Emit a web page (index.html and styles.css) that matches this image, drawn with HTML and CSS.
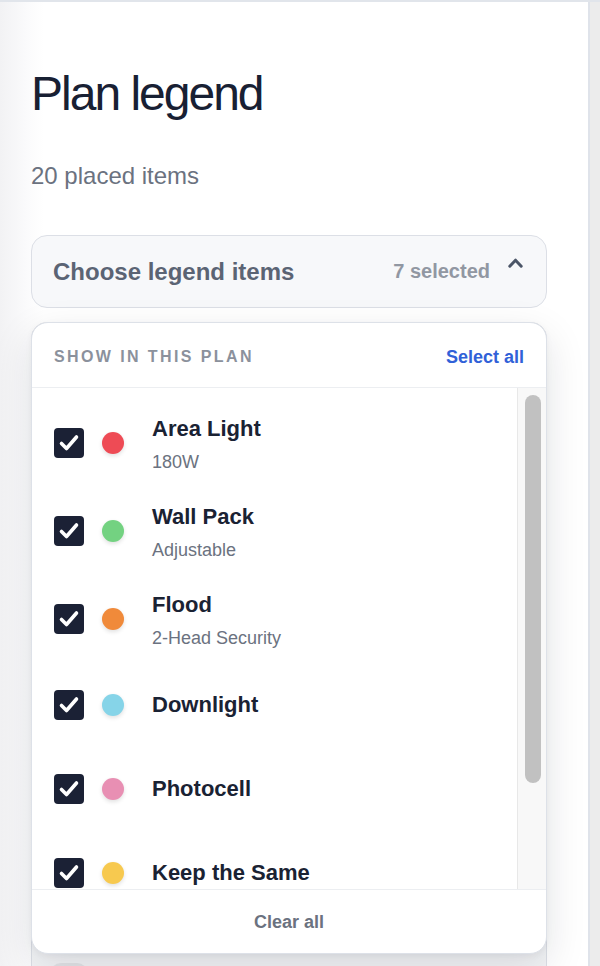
FILE: index.html
```html
<!DOCTYPE html>
<html lang="en">
<head>
<meta charset="utf-8">
<title>Plan legend</title>
<link rel="stylesheet" href="styles.css">
</head>
<body>
<div class="app">
  <aside class="panel">
    <h1 class="title">Plan legend</h1>
    <p class="count">20 placed items</p>
    <div class="picker">
      <button class="picker-btn" type="button">
        <span class="picker-label">Choose legend items</span>
        <span class="picker-count">7 selected</span>
        <svg class="chev" width="15" height="10" viewBox="0 0 15 10" aria-hidden="true"><polyline points="1.8,8.2 7.5,2.2 13.2,8.2" fill="none" stroke="#4b5567" stroke-width="3" stroke-linecap="round" stroke-linejoin="round"/></svg>
      </button>
      <div class="popover">
        <div class="pop-head">
          <span class="pop-label">Show in this plan</span>
          <span class="pop-action">Select all</span>
        </div>
        <div class="pop-body">
          <ul class="pop-list">
            <li class="item has-sub">
              <span class="check"><svg width="30" height="30" viewBox="0 0 30 30"><polyline points="7.5,15.5 12.5,20.5 22.5,9" fill="none" stroke="#fff" stroke-width="3.6" stroke-linecap="round" stroke-linejoin="round"/></svg></span>
              <span class="dot dot-red"></span>
              <span class="text"><span class="name">Area Light</span><span class="sub">180W</span></span>
            </li>
            <li class="item has-sub">
              <span class="check"><svg width="30" height="30" viewBox="0 0 30 30"><polyline points="7.5,15.5 12.5,20.5 22.5,9" fill="none" stroke="#fff" stroke-width="3.6" stroke-linecap="round" stroke-linejoin="round"/></svg></span>
              <span class="dot dot-green"></span>
              <span class="text"><span class="name">Wall Pack</span><span class="sub">Adjustable</span></span>
            </li>
            <li class="item has-sub">
              <span class="check"><svg width="30" height="30" viewBox="0 0 30 30"><polyline points="7.5,15.5 12.5,20.5 22.5,9" fill="none" stroke="#fff" stroke-width="3.6" stroke-linecap="round" stroke-linejoin="round"/></svg></span>
              <span class="dot dot-orange"></span>
              <span class="text"><span class="name">Flood</span><span class="sub">2-Head Security</span></span>
            </li>
            <li class="item">
              <span class="check"><svg width="30" height="30" viewBox="0 0 30 30"><polyline points="7.5,15.5 12.5,20.5 22.5,9" fill="none" stroke="#fff" stroke-width="3.6" stroke-linecap="round" stroke-linejoin="round"/></svg></span>
              <span class="dot dot-blue"></span>
              <span class="text"><span class="name">Downlight</span></span>
            </li>
            <li class="item">
              <span class="check"><svg width="30" height="30" viewBox="0 0 30 30"><polyline points="7.5,15.5 12.5,20.5 22.5,9" fill="none" stroke="#fff" stroke-width="3.6" stroke-linecap="round" stroke-linejoin="round"/></svg></span>
              <span class="dot dot-pink"></span>
              <span class="text"><span class="name">Photocell</span></span>
            </li>
            <li class="item">
              <span class="check"><svg width="30" height="30" viewBox="0 0 30 30"><polyline points="7.5,15.5 12.5,20.5 22.5,9" fill="none" stroke="#fff" stroke-width="3.6" stroke-linecap="round" stroke-linejoin="round"/></svg></span>
              <span class="dot dot-yellow"></span>
              <span class="text"><span class="name">Keep the Same</span></span>
            </li>
          </ul>
          <div class="scroll-track"><div class="scroll-thumb"></div></div>
        </div>
        <div class="pop-foot"><span class="pop-clear">Clear all</span></div>
      </div>
    </div>
    <div class="legend-card">
      <div class="legend-row"><span class="pill"></span></div>
      <div class="legend-row"><span class="pill"></span></div>
      <div class="legend-row"><span class="pill"></span></div>
      <div class="legend-row"><span class="pill"></span></div>
      <div class="legend-row"><span class="pill"></span></div>
      <div class="legend-row"><span class="pill"></span></div>
      <div class="legend-row"><span class="pill"></span></div>
      <div class="legend-row"><span class="pill"></span></div>
      <div class="legend-row"><span class="pill"></span></div>
    </div>
  </aside>
  <div class="rest"></div>
</div>
</body>
</html>
```

FILE: styles.css
```css
* { box-sizing: border-box; }

html, body {
  margin: 0;
  padding: 0;
  height: 100%;
}

body {
  background: #ececec;
  font-family: "Liberation Sans", Arial, Helvetica, sans-serif;
  overflow: hidden;
}

.app {
  display: flex;
  height: 966px;
  border-top: 2px solid #e1e5eb;
}

.panel {
  width: 590px;
  flex: none;
  height: 100%;
  overflow: hidden;
  border-right: 2px solid #dfe3ea;
  background: linear-gradient(90deg, #f2f2f4 0, #fbfbfc 28px, #ffffff 44px);
  padding: 63px 41px 0 31px;
}

.rest {
  flex: 1;
  background: #ececec;
}

.title {
  margin: 0;
  font-size: 48px;
  line-height: 57.6px;
  font-weight: 400;
  letter-spacing: -2px;
  color: #182033;
}

.count {
  margin: 39px 0 0;
  font-size: 24px;
  line-height: 28.8px;
  color: #6b7280;
}

.picker {
  position: relative;
  margin-top: 45px;
}

.picker-btn {
  display: flex;
  align-items: center;
  width: 100%;
  height: 73px;
  margin: 0;
  padding: 0 23px 0 21px;
  border: 1.5px solid #dcdfe6;
  border-radius: 16px;
  background: #f7f8fa;
  font-family: inherit;
  text-align: left;
  cursor: pointer;
}

.picker-label {
  flex: 1;
  font-size: 24px;
  font-weight: 700;
  color: #5b6474;
}

.picker-count {
  font-size: 20px;
  font-weight: 700;
  color: #9197a2;
}

.chev {
  margin-left: 18px;
  margin-bottom: 17px;
  flex: none;
}

.popover {
  position: absolute;
  top: calc(100% + 14px);
  left: 0;
  right: 0;
  z-index: 5;
  background: #ffffff;
  border: 1.5px solid #dde1e8;
  border-radius: 17px;
  box-shadow: 0 14px 40px rgba(20, 28, 45, 0.12), 0 2px 6px rgba(20, 28, 45, 0.05);
  overflow: hidden;
}

.pop-head {
  display: flex;
  align-items: center;
  justify-content: space-between;
  height: 65px;
  padding: 4px 22px 0;
  border-bottom: 1.5px solid #eceef1;
}

.pop-label {
  font-size: 16px;
  font-weight: 700;
  text-transform: uppercase;
  letter-spacing: 2.4px;
  color: #8b919c;
}

.pop-action {
  font-size: 18px;
  font-weight: 700;
  color: #3061d8;
}

.pop-body {
  display: flex;
  height: 501px;
}

.pop-list {
  flex: 1;
  list-style: none;
  margin: 0;
  padding: 10px 0;
  overflow: hidden;
}

.scroll-track {
  flex: none;
  width: 29px;
  padding: 7px 5px 0 7px;
  background: #f8f8f8;
  border-left: 1px solid #e8e8e8;
}

.scroll-thumb {
  height: 388px;
  border-radius: 8px;
  background: #c1c1c1;
}

.item {
  display: flex;
  align-items: center;
  padding: 16px 0 15px 22px;
}

.item.has-sub {
  padding: 14px 0 13px 22px;
}

.item.has-sub .text {
  margin-top: 4px;
}

.check {
  flex: none;
  width: 30px;
  height: 30px;
  border-radius: 4px;
  background: #1b2135;
  display: flex;
}

.dot {
  flex: none;
  width: 22px;
  height: 22px;
  border-radius: 50%;
  margin-left: 18px;
  box-shadow: 0 2px 4px rgba(0, 0, 0, 0.12);
}

.dot-red { background: #ee4b55; }
.dot-green { background: #73d281; }
.dot-orange { background: #f08a3a; }
.dot-blue { background: #86d4e8; }
.dot-pink { background: #e88fb3; }
.dot-yellow { background: #f7c94f; }

.text {
  display: flex;
  flex-direction: column;
  justify-content: center;
  min-height: 53px;
  margin-left: 28px;
}

.name {
  font-size: 22px;
  line-height: 26px;
  font-weight: 700;
  color: #1a2233;
}

.sub {
  margin-top: 9px;
  font-size: 18px;
  line-height: 22px;
  color: #6b7280;
}

.pop-foot {
  display: flex;
  align-items: center;
  justify-content: center;
  height: 64px;
  padding-top: 2px;
  border-top: 1.5px solid #eceef1;
}

.pop-clear {
  font-size: 18px;
  font-weight: 700;
  color: #6b7280;
}

.legend-card {
  margin-top: 14px;
  padding: 16px 18px;
  border: 1.5px solid #dcdfe6;
  border-radius: 16px;
  background: #f3f4f6;
}

.legend-row {
  height: 78px;
}

.pill {
  display: block;
  width: 38px;
  height: 22px;
  border-radius: 11px;
  background: #e3e4e7;
}
```
